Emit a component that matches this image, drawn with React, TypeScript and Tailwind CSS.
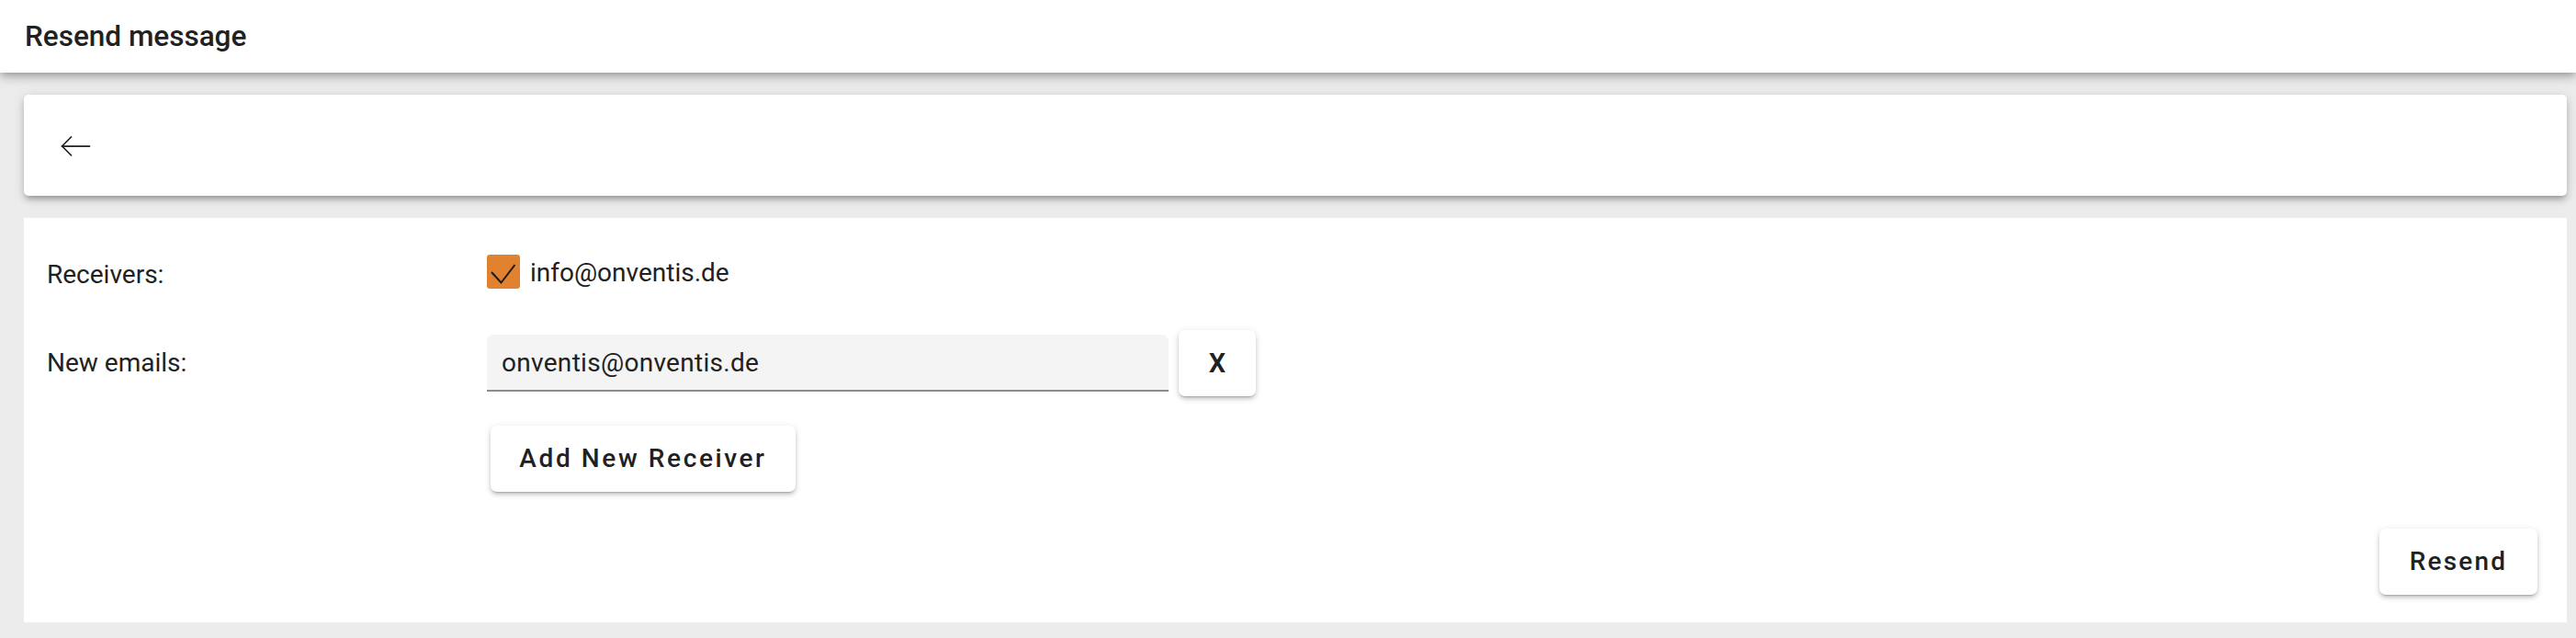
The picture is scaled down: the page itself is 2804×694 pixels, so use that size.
import React, { useState } from 'react'

const raised =
  'shadow-[0_3px_2px_-2px_rgba(0,0,0,0.2),0_3px_4px_0_rgba(0,0,0,0.14),0_2px_9px_0_rgba(0,0,0,0.12)]'

function BackArrow() {
  return (
    <svg width="33" height="22" viewBox="0 0 33 22" fill="none" stroke="#212121" strokeWidth="1.75" strokeLinecap="round" strokeLinejoin="round">
      <path d="M1.5 11H31.5" />
      <path d="M11.5 1L1.5 11L11.5 21" />
    </svg>
  )
}

function Check({ checked, onChange }: { checked: boolean; onChange: () => void }) {
  return (
    <button
      onClick={onChange}
      className={`w-[36px] h-[37px] rounded-[3px] flex-none ${checked ? 'bg-[#e0822f]' : 'border-2 border-[#757575] bg-white'}`}
    >
      {checked && (
        <svg width="36" height="37" viewBox="0 0 36 37" fill="none" stroke="#1a1a1a" strokeWidth="2">
          <path d="M5 19L15.5 30.5L30.5 11" />
        </svg>
      )}
    </button>
  )
}

export default function App() {
  const [checked, setChecked] = useState(true)
  const [emails, setEmails] = useState<string[]>(['onventis@onventis.de'])

  return (
    <div className="min-h-[694px] bg-[#ececec] font-['Roboto',sans-serif] text-[#212121]">
      <header className="relative z-10 h-[79px] bg-white flex items-center px-[27px] shadow-[0_3px_7px_-2px_rgba(0,0,0,0.2),0_6px_9px_0_rgba(0,0,0,0.14),0_2px_17px_0_rgba(0,0,0,0.12)]">
        <h1 className="text-[31.5px] font-medium leading-[40px]">Resend message</h1>
      </header>

      <div className="pl-[26px] pr-[10px] pt-[24px]">
        <div className="h-[110px] bg-white rounded-[5px] flex items-center pl-[40px] pt-[2px] shadow-[0_5px_5px_-3px_rgba(0,0,0,0.2),0_5px_7px_0_rgba(0,0,0,0.14),0_2px_14px_0_rgba(0,0,0,0.12)]">
          <button className="flex items-center"><BackArrow /></button>
        </div>

        <div className="mt-[24px] h-[440px] bg-white pl-[25px] pr-[32px] pt-[40px] text-[28px] leading-[40px]">
          <div className="flex items-start">
            <div className="w-[479px] mt-[2px]">Receivers:</div>
            <div className="flex items-start gap-[11px]">
              <Check checked={checked} onChange={() => setChecked(!checked)} />
              <span>info@onventis.de</span>
            </div>
          </div>

          {emails.map((e, i) => (
            <div key={i} className="flex items-center h-[72px] mt-[40px]">
              <div className="w-[479px]">{i === 0 ? 'New emails:' : ''}</div>
              <div className="flex items-center gap-[11px]">
                <input
                  value={e}
                  onChange={ev => setEmails(emails.map((x, j) => (j === i ? ev.target.value : x)))}
                  className="w-[742px] h-[62px] px-[16px] bg-[#f4f4f4] rounded-t-[7px] border-b-2 border-[#8c8c8c] outline-none tracking-[0.3px]"
                />
                <button
                  onClick={() => setEmails(emails.filter((_, j) => j !== i))}
                  className={`w-[84px] h-[72px] bg-white rounded-[7px] font-semibold text-[29px] ${raised}`}
                >
                  X
                </button>
              </div>
            </div>
          ))}

          <div className="flex mt-[32px]">
            <div className="w-[483px]" />
            <button
              onClick={() => setEmails([...emails, ''])}
              className={`w-[332px] h-[72px] bg-white rounded-[7px] font-medium tracking-[2.6px] ${raised}`}
            >
              Add New Receiver
            </button>
          </div>

          <div className="flex justify-end mt-[40px]">
            <button className={`w-[172px] h-[72px] bg-white rounded-[7px] font-medium tracking-[2.2px] ${raised}`}>
              Resend
            </button>
          </div>
        </div>
      </div>
    </div>
  )
}
